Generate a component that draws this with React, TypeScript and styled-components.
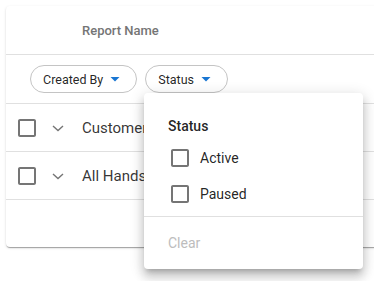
import React from "react";
import styled, { createGlobalStyle } from "styled-components";

const GlobalStyle = createGlobalStyle`
  html, body {
    margin: 0;
    padding: 0;
    overflow: hidden;
    background: #fff;
    font-family: Roboto, "Liberation Sans", sans-serif;
  }
`;

const Page = styled.div`
  position: relative;
  width: 374px;
  height: 281px;
  padding: 6px 0 0 6px;
  box-sizing: border-box;
`;

const Card = styled.div`
  width: 420px;
  background: #fff;
  border-radius: 4px;
  box-shadow: 0px 2px 1px -1px rgba(0, 0, 0, 0.2), 0px 1px 1px 0px rgba(0, 0, 0, 0.14),
    0px 1px 3px 0px rgba(0, 0, 0, 0.12);
`;

const HeaderRow = styled.div`
  height: 48px;
  display: flex;
  align-items: center;
  padding-left: 76px;
  border-bottom: 1px solid #e0e0e0;
  font-size: 13px;
  font-weight: 500;
  color: #757575;
`;

const FilterRow = styled.div`
  height: 48px;
  display: flex;
  align-items: center;
  gap: 8px;
  padding-left: 24px;
  border-bottom: 1px solid #e0e0e0;
`;

const Chip = styled.button`
  height: 28px;
  box-sizing: border-box;
  display: flex;
  align-items: center;
  padding: 0 9px 0 12px;
  border: 1px solid #c4c4c4;
  border-radius: 14px;
  background: #fff;
  font-family: inherit;
  font-size: 12.5px;
  color: rgba(0, 0, 0, 0.87);
`;

const Row = styled.div<{ $last?: boolean }>`
  height: 47px;
  display: flex;
  align-items: center;
  padding-left: 9px;
  border-bottom: ${(p) => (p.$last ? "none" : "1px solid #e0e0e0")};
  font-size: 15px;
  color: rgba(0, 0, 0, 0.8);
`;

const Chevron = styled.span`
  display: flex;
  margin-left: 7px;
  margin-right: 12px;
`;

const Popup = styled.div`
  position: absolute;
  left: 144px;
  top: 93px;
  width: 219px;
  height: 176px;
  box-sizing: border-box;
  background: #fff;
  border-radius: 4px;
  padding-top: 23px;
  box-shadow: 0px 5px 5px -3px rgba(0, 0, 0, 0.2), 0px 8px 10px 1px rgba(0, 0, 0, 0.14),
    0px 3px 14px 2px rgba(0, 0, 0, 0.12);
`;

const PopupTitle = styled.div`
  padding-left: 24px;
  line-height: 20px;
  font-size: 14px;
  font-weight: 500;
  color: rgba(0, 0, 0, 0.87);
`;

const Options = styled.div`
  padding: 4px 0 4px 24px;
  border-bottom: 1px solid #e0e0e0;
`;

const Option = styled.label`
  height: 36px;
  display: flex;
  align-items: center;
  gap: 8px;
  font-size: 14px;
  color: rgba(0, 0, 0, 0.87);
`;

const ClearButton = styled.div`
  height: 36px;
  margin-top: 8px;
  padding-left: 24px;
  display: flex;
  align-items: center;
  font-size: 14px;
  color: #bdbdbd;
`;

const CheckboxIcon = () => (
  <svg width="24" height="24" viewBox="0 0 24 24" fill="#757575">
    <path d="M19 5v14H5V5h14m0-2H5c-1.1 0-2 .9-2 2v14c0 1.1.9 2 2 2h14c1.1 0 2-.9 2-2V5c0-1.1-.9-2-2-2z" />
  </svg>
);

const DropIcon = () => (
  <svg width="24" height="24" viewBox="0 0 24 24" fill="#1976d2">
    <path d="M7.5 10l4.5 4.5 4.5-4.5z" />
  </svg>
);

const rows = ["Customer Onboarding", "All Hands Summary"];

export default function App() {
  return (
    <>
      <GlobalStyle />
      <Page>
        <Card>
          <HeaderRow>Report Name</HeaderRow>
          <FilterRow>
            <Chip>
              Created By
              <DropIcon />
            </Chip>
            <Chip>
              Status
              <DropIcon />
            </Chip>
          </FilterRow>
          {rows.map((name) => (
            <Row key={name}>
              <CheckboxIcon />
              <Chevron>
                <svg width="24" height="24" viewBox="0 0 24 24" fill="none" stroke="#757575" strokeWidth="1.4">
                  <path d="M7 10l5 4.5 5-4.5" />
                </svg>
              </Chevron>
              {name}
            </Row>
          ))}
          <Row $last />
        </Card>
        <Popup>
          <PopupTitle>Status</PopupTitle>
          <Options>
            <Option>
              <CheckboxIcon />
              Active
            </Option>
            <Option>
              <CheckboxIcon />
              Paused
            </Option>
          </Options>
          <ClearButton>Clear</ClearButton>
        </Popup>
      </Page>
    </>
  );
}
